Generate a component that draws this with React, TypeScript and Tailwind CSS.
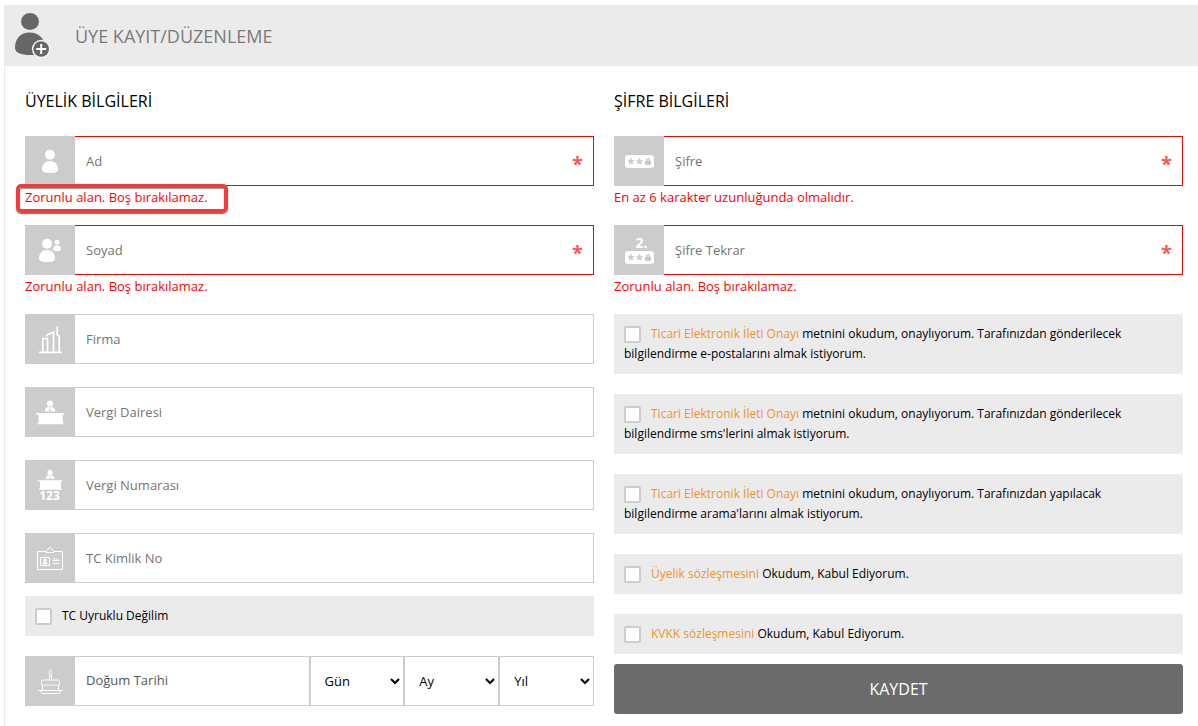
import { ReactNode, useState } from "react";
import clsx from "clsx";

interface TileProps {
  children: ReactNode;
}

const Tile: React.FC<TileProps> = ({ children }) => {
  return (
    <svg
      className="size-[50px] shrink-0 bg-[#cccccc]"
      viewBox="0 0 50 50"
      fill="white"
      aria-hidden="true"
    >
      {children}
    </svg>
  )
}

const PersonIcon = () => (
  <Tile>
    <circle cx="25" cy="18.7" r="5" />
    <path d="M17 33.5C17 28 20.5 25 25 25s8 3 8 8.5c0 2.6-3.5 3.6-8 3.6s-8-1-8-3.6z" />
  </Tile>
)

const PeopleIcon = () => (
  <Tile>
    <circle cx="22" cy="18.7" r="5" />
    <path d="M14 33.5C14 28 17.5 25 22 25s8 3 8 8.5c0 2.6-3.5 3.6-8 3.6s-8-1-8-3.6z" />
    <circle cx="32" cy="17.2" r="2.4" />
    <path d="M28 24.2c0-2.8 1.8-4 4-4s4 1.2 4 4c0 1.4-1.8 1.8-4 1.8s-4-.4-4-1.8z" />
  </Tile>
)

const CompanyIcon = () => (
  <Tile>
    <path
      d="M14 38.3h23M17.8 38V24.5h4.7V38M21.8 22.5V21l6.7-3v20M32.2 12.500V21l2 1v16M32.200 21v-8"
      fill="none"
      stroke="white"
      strokeWidth="1.7"
    />
  </Tile>
)

const DeskIcon = () => (
  <Tile>
    <circle cx="25" cy="16.5" r="3.1" />
    <path d="M19.8 24.5c0-3 1.7-4.3 3.7-5l1.5 1.5 1.5-1.5c2 .7 3.8 2 3.8 5z" />
    <path d="M24.6 21.5h.9l.4 3h-1.7z" fill="#cccccc" />
    <path d="M11 26h28v1.4h-1.3V36h.8v1.2H12.3V36h1.3v-8.6H11z" />
  </Tile>
)

const DeskNumberIcon = () => (
  <Tile>
    <circle cx="25" cy="12.4" r="2.6" />
    <path d="M20.7 19c0-2.3 1.3-3.5 3-4l1.3 1.2 1.3-1.2c1.7.5 3 1.7 3 4z" />
    <path d="M24.7 16.7h.7l.3 2.3h-1.3z" fill="#cccccc" />
    <path d="M12.7 20.3h24.7v1.3H36v6.9h.7v1.2H14v-1.2h1v-6.9h-2.3z" />
    <text x="24.5" y="40" fontSize="12" fontWeight="700" textAnchor="middle">123</text>
  </Tile>
)

const IdCardIcon = () => (
  <Tile>
    <g fill="none" stroke="white">
      <path d="M21 18.5h-8.5v18h25v-18H29" />
      <path d="M21 19.5h8c0-1.5-1-2.5-2.2-2.8.5-1.2-.5-2.2-1.8-2.2s-2.3 1-1.8 2.2c-1.2.3-2.2 1.3-2.2 2.8z" />
      <path d="M15.5 24.5h9v8h-9z" />
      <path d="M27.5 27.5h7M27.5 30.5h7M28 25.5l1 1 1.2-1 1.2 1 1.2-1 1.2 1" strokeWidth=".9" />
    </g>
    <circle cx="20" cy="27.2" r="1.5" />
    <path d="M17.3 31.2c0-1.6 1.2-2.2 2.7-2.2s2.7.6 2.7 2.2z" />
  </Tile>
)

const CakeIcon = () => (
  <Tile>
    <g fill="none" stroke="white">
      <path d="M25.4 13.5c1.2 1.5 1.6 2.2 1.6 3s-.7 1.5-1.6 1.5-1.5-.7-1.5-1.5.4-1.5 1.5-3z" />
      <path d="M24.5 24v-5h2v5" />
      <path d="M17.5 34v-4.5c-.7-.5-1-1-1-2V26c0-1.2.8-2 2-2h14c1.2 0 2 .8 2 2v1.5c0 1-.3 1.500-1 2V34" />
      <path d="M17 28.5c1 1 2.500 1 3.400 0 1 1.2 2.400 1.2 3.400 0 1 1.200 2.400 1.200 3.400 0 1 1.200 2.400 1.200 3.400 0 1 1 2.400 1 3.400 0" />
      <path d="M13 34.500h25M15.500 34.500c0 2 .8 3 2.500 3h15c1.700 0 2.500-1 2.500-3" />
    </g>
  </Tile>
)

const PasswordPill = () => (
  <>
    <rect x="11" y="19" width="29" height="13" rx="3" />
    <g stroke="#cccccc" strokeWidth="1.6" fill="none">
      <path d="M17 22.2v3.300M17 25.500l-2.900-1M17 25.500l2.900-1M17 25.500l-1.800 2.600M17 25.500l1.800 2.600" />
      <path d="M25.500 22.200v3.300M25.500 25.500l-2.900-1M25.500 25.500l2.900-1M25.500 25.500l-1.800 2.600M25.500 25.500l1.800 2.600" />
      <path d="M32.500 25.500v-1a1.500 1.500 0 0 1 3 0v1" strokeWidth="1.300" />
    </g>
    <rect x="31.200" y="24.800" width="5.600" height="4" rx=".5" fill="#c4c4c4" />
  </>
)

const PasswordIcon = () => (
  <Tile>
    <PasswordPill />
  </Tile>
)

const PasswordRepeatIcon = () => (
  <Tile>
    <text x="27.5" y="22.5" fontSize="14" fontWeight="700" textAnchor="middle">2.</text>
    <g transform="translate(0 7)">
      <PasswordPill />
    </g>
  </Tile>
)

const AddUserIcon = () => (
  <svg className="h-[50px] w-[40px] shrink-0" viewBox="0 0 40 50" fill="#666666" aria-hidden="true">
    <ellipse cx="15" cy="10.4" rx="9" ry="8.5" />
    <path d="M0 37C0 27 6 21.500 14.500 21.500S30 27 30 37c0 4.500-6 7-15 7S0 41.500 0 37z" />
    <circle cx="26.200" cy="38" r="9.300" fill="#f6f6f6" />
    <circle cx="26.200" cy="38" r="7.800" />
    <path d="M26.200 33v10M21.200 38h10" stroke="white" strokeWidth="2" />
  </svg>
)

interface FieldProps {
  id: string;
  label: string;
  icon: ReactNode;
  type?: string;
  error?: string;
  highlighted?: boolean;
}

const Field: React.FC<FieldProps> = ({
  id,
  label,
  icon,
  type = "text",
  error,
  highlighted,
}) => {
  return (
    <div className={error ? "mb-[17px]" : "mb-[23px]"}>
      <div className="relative flex">
        {icon}
        <input
          id={id}
          type={type}
          placeholder={label}
          aria-label={label}
          className={clsx(
            "h-[50px] min-w-0 flex-1 border border-l-0 bg-white px-[11px] text-[13px] outline-none placeholder:text-[#757575]",
            error ? "border-[#ff0000]" : "border-[#cccccc]"
          )}
        />
        {error && (
          <span className="absolute right-[11px] top-3.5 text-xl leading-7 font-bold text-[#ff5555]" aria-hidden="true">*</span>
        )}
      </div>
      {error && (
        <p className="relative text-[13px] leading-[22px] text-[#ff0000]">
          {error}
          {highlighted && (
            <span className="absolute -left-[9px] -top-0.5 h-[29px] w-[212px] rounded-[5px] border-4 border-[#f03c3c] shadow-[0_1px_1px_#777777,inset_0_1px_1px_#999999]" />
          )}
        </p>
      )}
    </div>
  )
}

interface ConsentProps {
  link?: string;
  children: ReactNode;
}

const Consent: React.FC<ConsentProps> = ({ link, children }) => {
  const [checked, setChecked] = useState(false);

  return (
    <label className="block bg-[#ebebeb] p-2.5 text-xs leading-5 text-black">
      <input
        type="checkbox"
        checked={checked}
        onChange={(e) => setChecked(e.target.checked)}
        className="mr-2.5 size-[17px] appearance-none rounded-xs border-2 border-[#cccccc] bg-white align-middle checked:bg-[#666666]"
      />
      {link && <a href="#" className="text-[#f0932b]">{link}</a>}
      {link && " "}
      {children}
    </label>
  )
}

interface DateSelectProps {
  label: string;
  options: string[];
}

const DateSelect: React.FC<DateSelectProps> = ({ label, options }) => {
  return (
    <select
      aria-label={label}
      className="h-[50px] min-w-0 border border-[#cccccc] bg-white pl-2.5 text-[13px] text-black"
    >
      <option>{label}</option>
      {options.map((option) => (
        <option key={option}>{option}</option>
      ))}
    </select>
  )
}

const range = (from: number, count: number) =>
  Array.from({ length: count }, (_, i) => String(from + i));

const App = () => {
  return (
    <div className="pl-1 pt-[5px] font-['Open_Sans',sans-serif]">
      <div className="border-l border-[#ebebeb]">
        <header className="flex h-[61px] items-center gap-5 bg-[#ebebeb] pl-2.5">
          <AddUserIcon />
          <h1 className="text-lg text-[#7a7a7a]">ÜYE KAYIT/DÜZENLEME</h1>
        </header>

        <form
          className="grid grid-cols-2 gap-5 pb-5 pl-5 pr-[15px] pt-[23px]"
          onSubmit={(e) => e.preventDefault()}
        >
          <section>
            <h2 className="mb-[23px] text-base leading-6 text-black">ÜYELİK BİLGİLERİ</h2>
            <Field id="ad" label="Ad" icon={<PersonIcon />} error="Zorunlu alan. Boş bırakılamaz." highlighted />
            <Field id="soyad" label="Soyad" icon={<PeopleIcon />} error="Zorunlu alan. Boş bırakılamaz." />
            <Field id="firma" label="Firma" icon={<CompanyIcon />} />
            <Field id="vergi-dairesi" label="Vergi Dairesi" icon={<DeskIcon />} />
            <Field id="vergi-numarasi" label="Vergi Numarası" icon={<DeskNumberIcon />} />
            <Field id="tc" label="TC Kimlik No" icon={<IdCardIcon />} />
            <div className="-mt-2.5 mb-5">
              <Consent>TC Uyruklu Değilim</Consent>
            </div>
            <div className="grid grid-cols-6">
              <div className="col-span-3 flex">
                <CakeIcon />
                <div className="flex flex-1 items-center border border-l-0 border-[#cccccc] px-[11px] text-[13px] text-[#555555]">
                  Doğum Tarihi
                </div>
              </div>
              <DateSelect label="Gün" options={range(1, 31)} />
              <DateSelect label="Ay" options={range(1, 12)} />
              <DateSelect label="Yıl" options={range(1940, 70)} />
            </div>
          </section>

          <section>
            <h2 className="mb-[23px] text-base leading-6 text-black">ŞİFRE BİLGİLERİ</h2>
            <Field
              id="sifre"
              type="password"
              label="Şifre"
              icon={<PasswordIcon />}
              error="En az 6 karakter uzunluğunda olmalıdır."
            />
            <Field
              id="sifre-tekrar"
              type="password"
              label="Şifre Tekrar"
              icon={<PasswordRepeatIcon />}
              error="Zorunlu alan. Boş bırakılamaz."
            />
            <div className="flex flex-col gap-5">
              <Consent link="Ticari Elektronik İleti Onayı">
                metnini okudum, onaylıyorum. Tarafınızdan gönderilecek bilgilendirme e-postalarını almak istiyorum.
              </Consent>
              <Consent link="Ticari Elektronik İleti Onayı">
                metnini okudum, onaylıyorum. Tarafınızdan gönderilecek bilgilendirme sms'lerini almak istiyorum.
              </Consent>
              <Consent link="Ticari Elektronik İleti Onayı">
                metnini okudum, onaylıyorum. Tarafınızdan yapılacak bilgilendirme arama'larını almak istiyorum.
              </Consent>
              <Consent link="Üyelik sözleşmesini">Okudum, Kabul Ediyorum.</Consent>
              <Consent link="KVKK sözleşmesini">Okudum, Kabul Ediyorum.</Consent>
            </div>
            <button
              type="submit"
              className="mt-2.5 h-[50px] w-full cursor-pointer rounded-[3px] bg-[#6b6b6b] text-base text-white"
            >
              KAYDET
            </button>
          </section>
        </form>
      </div>
    </div>
  )
}

export default App
